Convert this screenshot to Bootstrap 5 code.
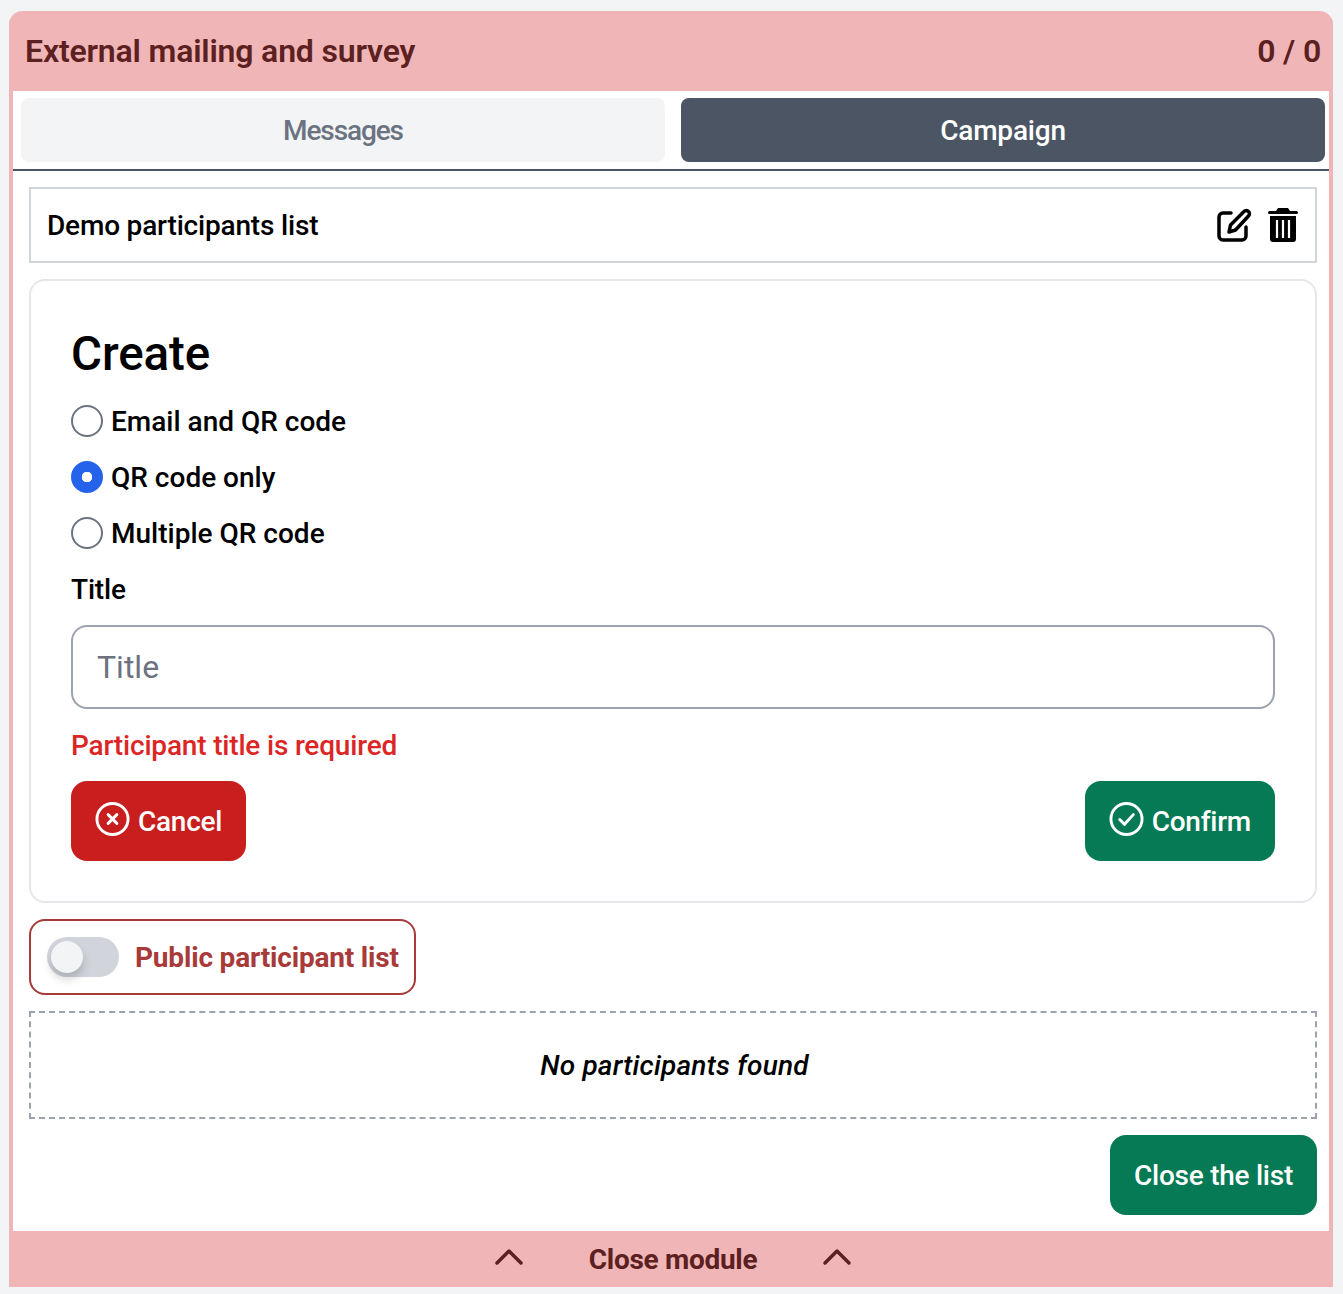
<!DOCTYPE html>
<html lang="en">
<head>
<meta charset="utf-8">
<title>External mailing and survey</title>
<link href="https://cdn.jsdelivr.net/npm/bootstrap@5.3.0/dist/css/bootstrap.min.css" rel="stylesheet">
<style>
html,body{height:100%}
body{background:#f3f4f6;font-family:Roboto,"Noto Sans",sans-serif;font-size:28px;line-height:40px;color:#000;padding:11px 10px 7px 9px;letter-spacing:-.18px}
.module-box{background:#fff;border:solid #f0b6b7;border-width:0 4px;border-radius:14px 14px 0 0;height:1276px;display:flex;flex-direction:column}
.module-head{background:#f0b6b7;color:#5c2020;height:80px;margin:0 -4px;padding:0 12px 0 16px;border-radius:14px 14px 0 0;font-weight:600;font-size:32px;letter-spacing:-.17px}
.tabs-row{padding:7px 4px 7px 8px;border-bottom:2px solid #4b5563;gap:16px;height:80px}
.tab-item{flex:1 1 0;height:64px;border-radius:8px;font-weight:500;padding-top:2px}
.tab-off{background:#f3f4f6;color:#6b7280;letter-spacing:-1.1px}
.tab-on{background:#4b5563;color:#fff}
.content-area{padding:16px 12px 0 16px;gap:16px;flex:1}
.list-row{height:76px;border:2px solid #d1d5db;padding:2px 17px 0 16px;font-weight:500}
.row-icons{margin-top:-3px}
.create-box{height:624px;border:2px solid #e5e7eb;border-radius:16px;padding:40px 40px 0;font-weight:500}
.create-title{font-size:47.500px;line-height:66px;font-weight:500;margin:0 0 6px;letter-spacing:-.1px}
.create-box .form-check{height:56px;margin:0;padding:0 0 0 40px;display:flex;align-items:center}
.create-box .form-check-input{width:32px;height:32px;margin:0 0 0 -40px;border:2px solid #6b7280;flex:none}
.create-box .form-check-input:checked{background-color:#2563eb;border-color:#2563eb;background-image:radial-gradient(circle,#fff 5px,transparent 5.500px)}
.create-box .form-check-label{margin-left:8px;padding-top:2px;letter-spacing:0}
.title-label{display:block;height:56px;line-height:58px;margin:0}
.title-input.form-control{height:84px;border:2px solid #9ca3af;border-radius:16px;font-size:32px;padding:0 24px;margin-top:8px}
.title-input::placeholder{color:#6b7280}
.error-text{color:#dc2626;height:72px;line-height:74px}
.act-btn.btn{height:80px;border:0;border-radius:16px;font-size:28px;font-weight:500;color:#fff;padding:2px 24px 0;display:inline-flex;align-items:center;gap:8px;letter-spacing:-.25px}
.btn-cancel{background:#c81e1e}
.btn-ok{background:#057a55}
.act-btn svg{width:35px;height:36px;margin-top:-6px;flex:none}
.public-box{width:387px;height:76px;border:2px solid #a83a3a;border-radius:16px;padding:0 16px;color:#a83a3a;font-weight:700;gap:16px;white-space:nowrap}
.public-box label{padding-top:2px}
.public-box .form-check{margin:0;padding:0;min-height:0;line-height:0}
.public-box .form-check-input{width:72px;height:40px;margin:0;float:none;background-color:#d1d5db;border:0;border-radius:20px;background-image:none;box-shadow:none}
.switch-wrap{position:relative}
.switch-knob{position:absolute;left:4px;top:4px;width:32px;height:32px;border-radius:50%;background:#f3f4f6;box-shadow:0 6px 10px rgba(0,0,0,.18)}
.empty-box{height:108px;border:2px dashed #9ca3af;font-style:italic;font-weight:500;padding:2px 0 0 3px;letter-spacing:.2px}
.close-list{align-self:flex-end}
.module-foot{background:#f0b6b7;color:#5c2020;height:56px;margin:0 -4px;font-weight:700;padding-left:4px;flex:none;gap:64px;letter-spacing:-.3px}
.module-foot svg{width:32px;height:20px;margin-bottom:6px}
.module-foot span{padding-top:2px}
.icon-edit{width:36px;height:36px}
.icon-bin{width:30px;height:36px}
</style>
</head>
<body>
<div class="module-box">
  <div class="module-head d-flex justify-content-between align-items-center"><span>External mailing and survey</span><span>0 / 0</span></div>
  <div class="tabs-row d-flex">
    <div class="tab-item tab-off d-flex align-items-center justify-content-center">Messages</div>
    <div class="tab-item tab-on d-flex align-items-center justify-content-center">Campaign</div>
  </div>
  <div class="content-area d-flex flex-column">
    <div class="list-row d-flex justify-content-between align-items-center">
      <span>Demo participants list</span>
      <span class="row-icons d-flex align-items-center gap-3">
        <svg class="icon-edit" viewBox="0 0 36 36" fill="none" stroke="#000" stroke-width="3.500" stroke-linecap="round" stroke-linejoin="round"><path d="M15 6H7a4 4 0 0 0-4 4v19a4 4 0 0 0 4 4h19a4 4 0 0 0 4-4v-9"/><path d="M13 25l1.500-7L28 4.500a3 3 0 0 1 4.500 0a3.200 3.200 0 0 1 0 4.500L19.500 23z"/></svg>
        <svg class="icon-bin" viewBox="0 0 30 36"><path fill="#000" d="M10 1h10l2 3h6.500a1.500 1.500 0 0 1 0 3H1.500a1.500 1.500 0 0 1 0-3H8zM2 9h26v23a3 3 0 0 1-3 3H5a3 3 0 0 1-3-3z"/><path stroke="#fff" stroke-width="2.200" d="M9 13v18M15 13v18M21 13v18"/></svg>
      </span>
    </div>
    <div class="create-box">
      <h2 class="create-title">Create</h2>
      <div class="form-check"><input class="form-check-input" type="radio" name="kind" id="k1"><label class="form-check-label" for="k1">Email and QR code</label></div>
      <div class="form-check"><input class="form-check-input" type="radio" name="kind" id="k2" checked><label class="form-check-label" for="k2">QR code only</label></div>
      <div class="form-check"><input class="form-check-input" type="radio" name="kind" id="k3"><label class="form-check-label" for="k3">Multiple QR code</label></div>
      <label class="title-label" for="ti">Title</label>
      <input id="ti" class="form-control title-input" type="text" placeholder="Title">
      <div class="error-text">Participant title is required</div>
      <div class="d-flex justify-content-between">
        <button class="btn act-btn btn-cancel" type="button"><svg viewBox="0 0 36 36" fill="none" stroke="#fff" stroke-width="3" stroke-linecap="round"><circle cx="18" cy="18" r="16"/><path d="M13.500 13.500l9 9M22.500 13.500l-9 9"/></svg>Cancel</button>
        <button class="btn act-btn btn-ok" type="button"><svg viewBox="0 0 36 36" fill="none" stroke="#fff" stroke-width="3" stroke-linecap="round" stroke-linejoin="round"><circle cx="18" cy="18" r="16"/><path d="M11 18.500l5 5 9-10"/></svg>Confirm</button>
      </div>
    </div>
    <div class="public-box d-flex align-items-center">
      <div class="form-check form-switch switch-wrap"><input class="form-check-input" type="checkbox" role="switch" id="pub"><span class="switch-knob"></span></div>
      <label for="pub">Public participant list</label>
    </div>
    <div class="empty-box d-flex align-items-center justify-content-center">No participants found</div>
    <button class="btn act-btn btn-ok close-list" type="button">Close the list</button>
  </div>
  <div class="module-foot d-flex align-items-center justify-content-center">
    <svg viewBox="0 0 32 20" fill="none" stroke="#5c2020" stroke-width="3.500" stroke-linecap="round" stroke-linejoin="round"><path d="M4 17L16 5l12 12"/></svg>
    <span>Close module</span>
    <svg viewBox="0 0 32 20" fill="none" stroke="#5c2020" stroke-width="3.500" stroke-linecap="round" stroke-linejoin="round"><path d="M4 17L16 5l12 12"/></svg>
  </div>
</div>
</body>
</html>
